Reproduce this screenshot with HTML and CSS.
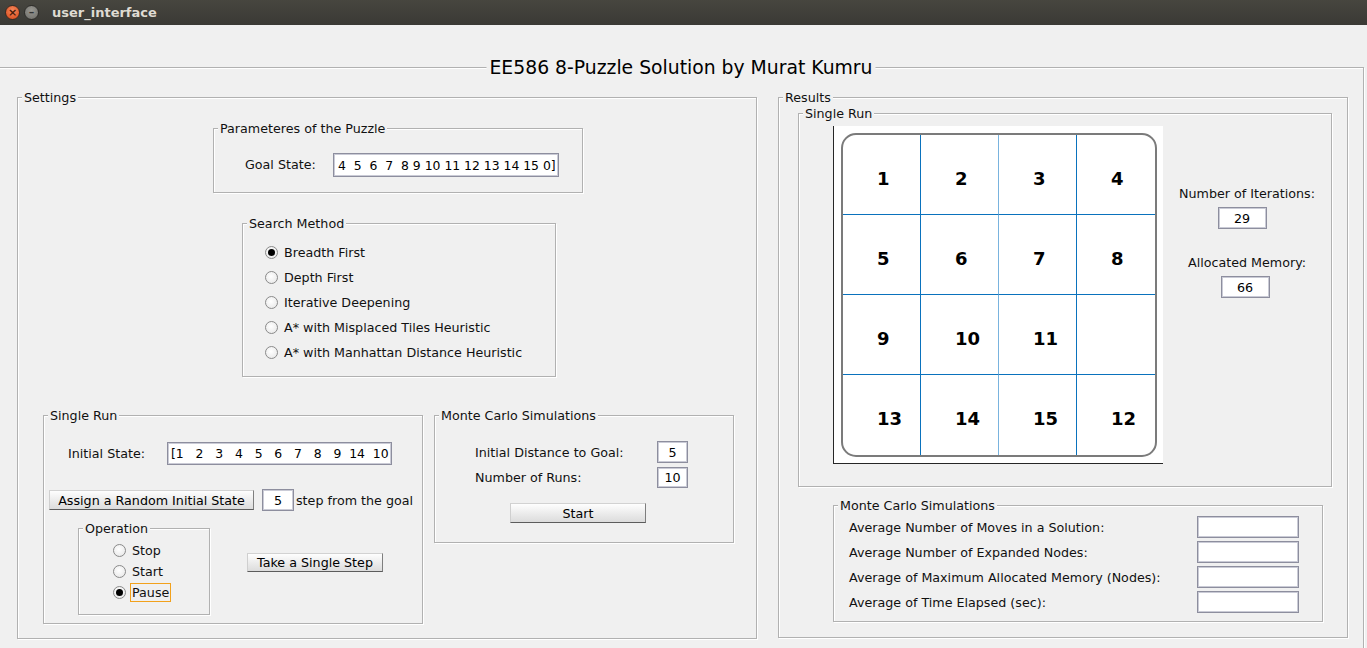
FILE: index.html
```html
<!DOCTYPE html>
<html>
<head>
<meta charset="utf-8">
<title>user_interface</title>
<link rel="stylesheet" href="styles.css">
</head>
<body>
<div class="titlebar">
  <span class="wbtn close">×</span>
  <span class="wbtn min">–</span>
  <span class="wtitle">user_interface</span>
</div>

<div class="main etched">
  <span class="cap title">EE586 8-Puzzle Solution by Murat Kumru</span>

  <section class="settings etched">
    <span class="cap">Settings</span>

    <div class="params etched">
      <span class="cap">Parameteres of the Puzzle</span>
      <span class="lbl goal-lbl">Goal State:</span>
      <div class="field goal">4  5  6  7  8 9 10 11 12 13 14 15 0]</div>
    </div>

    <div class="search etched">
      <span class="cap">Search Method</span>
      <div class="ropt"><span class="radio on"></span><span class="rtext">Breadth First</span></div>
      <div class="ropt"><span class="radio"></span><span class="rtext">Depth First</span></div>
      <div class="ropt"><span class="radio"></span><span class="rtext">Iterative Deepening</span></div>
      <div class="ropt"><span class="radio"></span><span class="rtext">A* with Misplaced Tiles Heuristic</span></div>
      <div class="ropt"><span class="radio"></span><span class="rtext">A* with Manhattan Distance Heuristic</span></div>
    </div>

    <div class="bottom">
      <div class="srun etched">
        <span class="cap">Single Run</span>
        <div class="sr-row1">
          <span class="lbl init-lbl">Initial State:</span>
          <div class="field init">[1   2   3   4   5   6   7   8   9  14  10</div>
        </div>
        <div class="sr-row2">
          <div class="btn assign">Assign a Random Initial State</div>
          <div class="field c steps">5</div>
          <span class="lbl stepl">step from the goal</span>
        </div>
        <div class="sr-row3">
          <div class="op etched">
            <span class="cap">Operation</span>
            <div class="oopt"><span class="radio"></span><span class="rtext">Stop</span></div>
            <div class="oopt"><span class="radio"></span><span class="rtext">Start</span></div>
            <div class="oopt"><span class="radio on"></span><span class="rtext focus">Pause</span></div>
          </div>
          <div class="btn single">Take a Single Step</div>
        </div>
      </div>

      <div class="mc etched">
        <span class="cap">Monte Carlo Simulations</span>
        <div class="mc-row">
          <span class="lbl mc-lbl">Initial Distance to Goal:</span>
          <div class="field c mcf">5</div>
        </div>
        <div class="mc-row second">
          <span class="lbl mc-lbl">Number of Runs:</span>
          <div class="field c mcf">10</div>
        </div>
        <div class="btn start">Start</div>
      </div>
    </div>
  </section>

  <section class="results etched">
    <span class="cap">Results</span>

    <div class="rsr etched">
      <span class="cap">Single Run</span>
      <div class="axes">
        <div class="board">
          <div class="cell">1</div><div class="cell">2</div><div class="cell">3</div><div class="cell">4</div>
          <div class="cell">5</div><div class="cell">6</div><div class="cell">7</div><div class="cell">8</div>
          <div class="cell">9</div><div class="cell">10</div><div class="cell">11</div><div class="cell"></div>
          <div class="cell">13</div><div class="cell">14</div><div class="cell">15</div><div class="cell">12</div>
        </div>
      </div>
      <div class="side">
        <div class="side-lbl">Number of Iterations:</div>
        <div class="field c sidef iter">29</div>
        <div class="side-lbl mem">Allocated Memory:</div>
        <div class="field c sidef memf">66</div>
      </div>
    </div>

    <div class="rmc etched">
      <span class="cap">Monte Carlo Simulations</span>
      <div class="rmc-row"><span class="lbl rmc-lbl">Average Number of Moves in a Solution:</span><div class="field rmcf"></div></div>
      <div class="rmc-row"><span class="lbl rmc-lbl">Average Number of Expanded Nodes:</span><div class="field rmcf"></div></div>
      <div class="rmc-row"><span class="lbl rmc-lbl">Average of Maximum Allocated Memory (Nodes):</span><div class="field rmcf"></div></div>
      <div class="rmc-row"><span class="lbl rmc-lbl">Average of Time Elapsed (sec):</span><div class="field rmcf"></div></div>
    </div>
  </section>
</div>
</body>
</html>
```

FILE: styles.css
```css
* { box-sizing: border-box; }

html, body {
  margin: 0;
  padding: 0;
}

body {
  width: 1367px;
  height: 648px;
  overflow: hidden;
  background: #f0f0f0;
  font-family: "DejaVu Sans", "Liberation Sans", sans-serif;
  font-size: 12.7px;
  line-height: 15px;
  color: #111;
}

/* ---------- window title bar ---------- */
.titlebar {
  height: 25px;
  background: linear-gradient(#47463f, #3a3935);
  display: flex;
  align-items: center;
  padding-left: 5px;
}

.wbtn {
  width: 15px;
  height: 15px;
  border-radius: 50%;
  margin-right: 4px;
  display: flex;
  align-items: center;
  justify-content: center;
  font-size: 11px;
  line-height: 11px;
  font-weight: bold;
}

.close {
  background: radial-gradient(circle at 50% 35%, #f68a5f, #e05a2b 70%, #c8461c);
  color: #4a1a08;
  border: 1px solid #3a2a22;
}

.min {
  background: radial-gradient(circle at 50% 35%, #9a9993, #7a7974 70%, #605f5a);
  color: #333;
  border: 1px solid #2e2d2a;
}

.wtitle {
  margin-left: 9px;
  color: #dfdbd2;
  font-weight: bold;
  font-size: 13px;
}

/* ---------- etched group boxes ---------- */
.etched {
  position: relative;
  border: 1px solid #b1b1b1;
  box-shadow: inset 1px 1px 0 #fff, 1px 1px 0 #fff;
  flex-shrink: 0;
}

.cap {
  position: absolute;
  top: -7px;
  left: 4px;
  padding: 0 2px;
  background: #f0f0f0;
  line-height: 14px;
  white-space: nowrap;
}

.cap.title {
  top: -11px;
  left: 50%;
  transform: translateX(-50%);
  padding: 0 3px;
  font-size: 18.8px;
  line-height: 22px;
  color: #000;
}

.main {
  margin-top: 42px;
  margin-left: -2px;
  width: 1366px;
  height: 600px;
  display: flex;
  align-items: flex-start;
  padding: 29px 0 0 18px;
}

.settings {
  width: 740px;
  height: 542px;
}

.results {
  margin-left: 21px;
  width: 570px;
  height: 541px;
}

/* ---------- common widgets ---------- */
.lbl {
  white-space: nowrap;
  flex-shrink: 0;
}

.field {
  background: #fff;
  border: 1px solid #8d8e9e;
  box-shadow: inset 0 0 0 1px #cacbd6;
  white-space: pre;
  overflow: hidden;
  display: flex;
  align-items: center;
  flex-shrink: 0;
  color: #000;
}

.field.c {
  justify-content: center;
}

.btn {
  display: flex;
  align-items: center;
  justify-content: center;
  background: linear-gradient(#fefefe, #e9e9e9 60%, #dcdcdc);
  border: 1px solid;
  border-color: #d2d2d2 #7e7e7e #5c5c5c #cfcfcf;
  white-space: nowrap;
  color: #000;
  flex-shrink: 0;
}

.radio {
  position: relative;
  width: 13px;
  height: 13px;
  border-radius: 50%;
  border: 1px solid #8a8a8a;
  background: radial-gradient(circle at 45% 40%, #ffffff, #e4e4e4);
  flex-shrink: 0;
}

.radio.on::after {
  content: "";
  position: absolute;
  left: 2px;
  top: 2px;
  width: 7px;
  height: 7px;
  border-radius: 50%;
  background: #000;
}

.rtext {
  margin-left: 6px;
  white-space: nowrap;
}

.rtext.focus {
  margin-left: 4px;
  padding: 1px 1px;
  border: 1px solid #f2a11c;
}

/* ---------- settings: parameters ---------- */
.params {
  margin: 30px 0 0 195px;
  width: 370px;
  height: 65px;
  display: flex;
  align-items: flex-start;
  padding: 24px 0 0 31px;
}

.goal-lbl {
  width: 88px;
  line-height: 24px;
}

.field.goal {
  width: 226px;
  height: 24px;
  padding-left: 4px;
  font-size: 12.4px;
}

/* ---------- settings: search method ---------- */
.search {
  margin: 30px 0 0 224px;
  width: 314px;
  height: 154px;
  padding: 16px 0 0 22px;
}

.ropt {
  height: 25px;
  display: flex;
  align-items: center;
}

/* ---------- settings: bottom row ---------- */
.bottom {
  display: flex;
  align-items: flex-start;
  margin: 38px 0 0 25px;
}

.srun {
  width: 380px;
  height: 209px;
}

.sr-row1 {
  margin-top: 26px;
  padding-left: 24px;
  height: 23px;
  display: flex;
  align-items: center;
}

.init-lbl {
  width: 99px;
}

.field.init {
  width: 225px;
  height: 23px;
  padding-left: 3px;
  font-size: 12.4px;
}

.sr-row2 {
  margin-top: 24px;
  padding-left: 5px;
  height: 22px;
  display: flex;
  align-items: center;
}

.btn.assign {
  width: 205px;
  height: 20px;
}

.field.steps {
  margin-left: 8px;
  width: 32px;
  height: 22px;
}

.stepl {
  margin-left: 2px;
}

.sr-row3 {
  margin-top: 17px;
  padding-left: 34px;
  display: flex;
  align-items: flex-start;
}

.op {
  width: 132px;
  height: 87px;
  padding: 11px 0 0 34px;
}

.oopt {
  height: 21px;
  display: flex;
  align-items: center;
}

.btn.single {
  margin: 25px 0 0 37px;
  width: 136px;
  height: 19px;
}

.mc {
  margin-left: 11px;
  width: 300px;
  height: 128px;
  padding: 25px 0 0 40px;
}

.mc-row {
  height: 22px;
  display: flex;
  align-items: center;
}

.mc-row.second {
  margin-top: 4px;
  height: 21px;
}

.mc-lbl {
  width: 182px;
}

.field.mcf {
  width: 31px;
  height: 100%;
}

.btn.start {
  margin: 15px 0 0 35px;
  width: 136px;
  height: 20px;
}

/* ---------- results ---------- */
.rsr {
  margin: 15px 0 0 19px;
  width: 534px;
  height: 374px;
  display: flex;
  align-items: flex-start;
}

.axes {
  margin: 12px 0 0 34px;
  width: 330px;
  height: 338px;
  background: #fff;
  border-left: 1px solid #262626;
  border-bottom: 1px solid #262626;
  flex-shrink: 0;
}

.board {
  margin: 7px 0 0 7px;
  width: 316px;
  height: 324px;
  border: 2px solid #7b7b7b;
  border-radius: 15px;
  overflow: hidden;
  display: grid;
  grid-template-columns: repeat(4, 1fr);
  grid-template-rows: repeat(4, 1fr);
  background: #fff;
}

.cell {
  border-right: 1px solid #0a72bd;
  border-bottom: 1px solid #0a72bd;
  display: flex;
  align-items: center;
  padding: 8px 0 0 34px;
  font-weight: bold;
  font-size: 18px;
  line-height: 20px;
  color: #000;
}

.cell:nth-child(4n+2) {
  border-right-color: #79b3de;
}

.cell:nth-child(4n) {
  border-right: none;
}

.cell:nth-child(n+13) {
  border-bottom: none;
}

.side {
  flex: 1;
  padding-top: 72px;
  display: flex;
  flex-direction: column;
  align-items: center;
}

.side-lbl {
  line-height: 16px;
  white-space: nowrap;
}

.side-lbl.mem {
  margin-top: 26px;
}

.field.sidef {
  margin-top: 5px;
  width: 49px;
  height: 22px;
}

.field.iter {
  margin-left: -10px;
}

.field.memf {
  margin-left: -4px;
}

.rmc {
  margin: 18px 0 0 54px;
  width: 490px;
  height: 117px;
  padding: 10px 0 0 15px;
}

.rmc-row {
  height: 22px;
  margin-bottom: 3px;
  display: flex;
  align-items: center;
}

.rmc-lbl {
  width: 348px;
}

.field.rmcf {
  width: 102px;
  height: 22px;
}
```
